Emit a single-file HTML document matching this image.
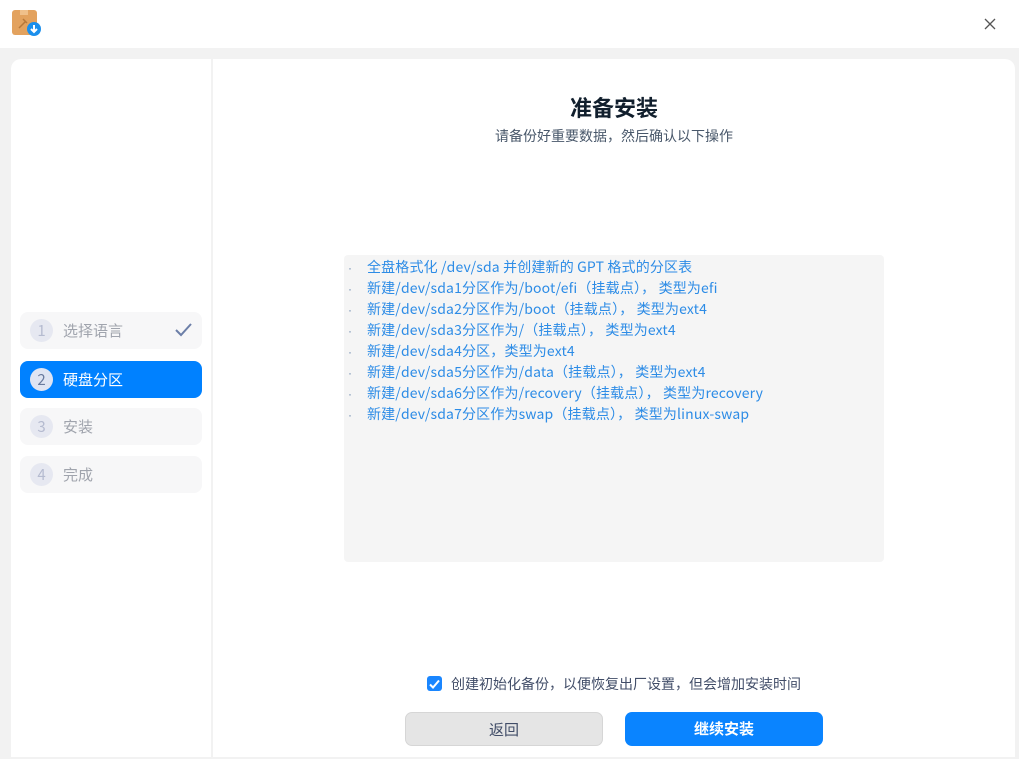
<!DOCTYPE html>
<html><head><meta charset="utf-8"><style>
*{margin:0;padding:0;box-sizing:border-box}
body{width:1019px;height:759px;background:#f2f2f2;font-family:"Noto Sans CJK SC","Liberation Sans",sans-serif;position:relative;overflow:hidden}
.title{position:absolute;left:0;top:0;width:1019px;height:48px;background:#fff}
.panel{position:absolute;background:#fff;top:59px;height:698px}
.left{left:11px;width:200px;border-radius:10px 0 0 0}
.right{left:213px;width:802px;border-radius:0 10px 0 0}
.step{position:absolute;left:9px;width:182px;height:37px;background:#f7f7f8;border-radius:8px;font-size:15px;color:#a0a4ad}
.step .n{position:absolute;left:10px;top:7px;width:23px;height:23px;border-radius:50%;background:#e6e8f1;color:#b5bbd0;font-size:15px;text-align:center;line-height:23px}
.step .t{position:absolute;left:43px;top:0;line-height:37px}
.step.a{background:#0081ff;color:#fff}
.step.a .n{background:#dfe4f3;color:#6a7a9e}
h1{position:absolute;top:30px;left:0;width:802px;text-align:center;font-size:22px;line-height:36px;color:#111f2d;font-weight:bold}
.sub{position:absolute;top:66px;left:0;width:802px;text-align:center;font-size:14px;line-height:22px;color:#48576a}
.box{position:absolute;left:131px;top:196px;width:540px;height:307px;background:#f5f5f5;border-radius:4px;padding-top:2px}
.box div{font-size:14px;color:#2d8ce6;height:21px;line-height:21px;padding-left:4px;white-space:nowrap;letter-spacing:0.15px}
.box span{display:inline-block;width:19px;color:#6f8bb0;font-family:"Liberation Sans",sans-serif;font-size:12px}
.chk{position:absolute;top:614px;left:214px;font-size:14px;line-height:22px;color:#414d68}
.cb{position:absolute;left:0;top:3px;width:15px;height:15px;background:#1a86ff;border-radius:3px}
.btn{position:absolute;top:653px;width:198px;height:34px;border-radius:7px;text-align:center;line-height:34px;font-size:15px}
</style></head><body>
<div class="title">
<svg style="position:absolute;left:12px;top:10px" width="30" height="28" viewBox="0 0 30 28"><rect x="0" y="0" width="25" height="25" rx="3" fill="#e3a25e"/><rect x="8" y="0" width="8" height="5" fill="#f0c08a"/><path d="M7 18l7-7M11 9l4 4" stroke="#b87838" stroke-width="1.5"/><circle cx="22" cy="19" r="7" fill="#1b8fec"/><path d="M22 15v6M19 19l3 3 3-3" stroke="#fff" stroke-width="2" fill="none"/></svg>
<svg style="position:absolute;left:984px;top:18px" width="12" height="12"><path d="M1 1L11 11M11 1L1 11" stroke="#555" stroke-width="1.3"/></svg>
</div>
<div class="panel left">
<div class="step" style="top:253px"><div class="n">1</div><div class="t">选择语言</div><svg style="position:absolute;left:155px;top:11px" width="17" height="14"><path d="M1 7l5 5 10-11" stroke="#6c7fa8" stroke-width="2" fill="none"/></svg></div>
<div class="step a" style="top:302px"><div class="n">2</div><div class="t">硬盘分区</div></div>
<div class="step" style="top:349px"><div class="n">3</div><div class="t">安装</div></div>
<div class="step" style="top:397px"><div class="n">4</div><div class="t">完成</div></div>
</div>
<div class="panel right">
<h1>准备安装</h1>
<div class="sub">请备份好重要数据，然后确认以下操作</div>
<div class="box">
<div><span>·</span>全盘格式化 /dev/sda 并创建新的 GPT 格式的分区表</div>
<div><span>·</span>新建/dev/sda1分区作为/boot/efi（挂载点）， 类型为efi</div>
<div><span>·</span>新建/dev/sda2分区作为/boot（挂载点）， 类型为ext4</div>
<div><span>·</span>新建/dev/sda3分区作为/（挂载点）， 类型为ext4</div>
<div><span>·</span>新建/dev/sda4分区，类型为ext4</div>
<div><span>·</span>新建/dev/sda5分区作为/data（挂载点）， 类型为ext4</div>
<div><span>·</span>新建/dev/sda6分区作为/recovery（挂载点）， 类型为recovery</div>
<div><span>·</span>新建/dev/sda7分区作为swap（挂载点）， 类型为linux-swap</div>
</div>
<div class="chk"><div class="cb"><svg width="15" height="15"><path d="M3 7.5l3 3 6-7" stroke="#fff" stroke-width="2" fill="none"/></svg></div><span style="margin-left:24px">创建初始化备份，以便恢复出厂设置，但会增加安装时间</span></div>
<div class="btn" style="left:192px;background:#e5e5e5;border:1px solid #d6d6d6;color:#414d68">返回</div>
<div class="btn" style="left:412px;background:#0a84ff;color:#fff;font-weight:bold">继续安装</div>
</div>
</body></html>
